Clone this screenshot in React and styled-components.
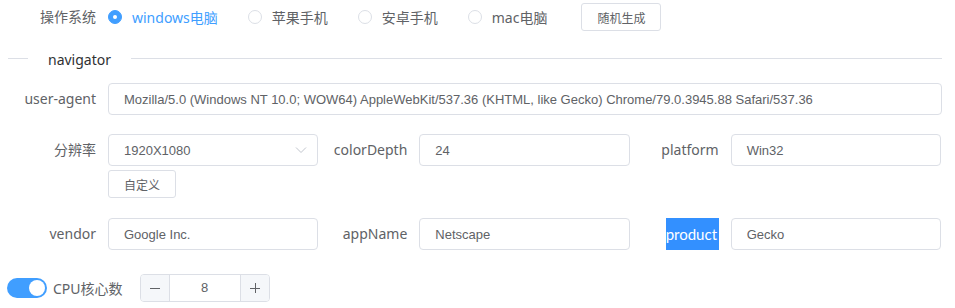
import React from "react";
import styled, { createGlobalStyle } from "styled-components";

const GlobalStyle = createGlobalStyle`
  html, body {
    margin: 0;
    padding: 0;
    background: #fff;
  }
  body {
    font-family: "Noto Sans", "Noto Sans CJK SC", sans-serif;
    color: #606266;
  }
`;

const Page = styled.div`
  width: 934px;
  padding: 0 13px 0 8px;
`;

const TopRow = styled.div`
  display: flex;
  align-items: center;
  height: 34px;
`;

const Label = styled.label`
  flex: 0 0 100px;
  box-sizing: border-box;
  padding-right: 12px;
  text-align: right;
  font-size: 14px;
  line-height: 32px;
  color: #606266;
  white-space: nowrap;
`;

const Selected = styled.span`
  background: #3390ff;
  color: #fff;
  font-family: "Lato", sans-serif;
  font-size: 15px;
  display: inline-block;
  line-height: 32px;
  width: 53px;
  overflow: hidden;
  vertical-align: top;
  text-align: left;
`;

const RadioGroup = styled.div`
  display: flex;
  align-items: center;
`;

const Radio = styled.span`
  display: inline-flex;
  align-items: center;
  margin-right: 30px;
  font-size: 14px;
  color: ${p => (p.checked ? "#409eff" : "#606266")};
  cursor: pointer;
`;

const RadioDot = styled.span`
  box-sizing: border-box;
  width: 14px;
  height: 14px;
  border-radius: 50%;
  border: 1px solid ${p => (p.checked ? "#409eff" : "#dcdfe6")};
  background: ${p => (p.checked ? "#409eff" : "#fff")};
  margin-right: 10px;
  display: flex;
  align-items: center;
  justify-content: center;
  &::after {
    content: "";
    width: 4px;
    height: 4px;
    border-radius: 50%;
    background: #fff;
    display: ${p => (p.checked ? "block" : "none")};
  }
`;

const MiniButton = styled.button`
  box-sizing: border-box;
  height: 28px;
  padding: 0 15px;
  margin-left: ${p => p.$ml || 0}px;
  border: 1px solid #dcdfe6;
  border-radius: 3px;
  background: #fff;
  color: #606266;
  font-family: "Noto Sans CJK SC", sans-serif;
  font-size: 12px;
  cursor: pointer;
`;

const Divider = styled.div`
  position: relative;
  height: 1px;
  background: #dcdfe6;
  margin: 24px 0;
`;

const DividerText = styled.span`
  position: absolute;
  left: 20px;
  top: 50%;
  transform: translateY(-50%);
  padding: 0 20px;
  background: #fff;
  font-size: 14px;
  font-weight: 400;
  color: #303133;
`;

const FormRow = styled.div`
  display: ${p => (p.cols ? "grid" : "flex")};
  grid-template-columns: repeat(${p => p.cols || 1}, 1fr);
  margin-bottom: ${p => p.mb}px;
`;

const Item = styled.div`
  display: flex;
  align-items: flex-start;
  padding-right: ${p => (p.full ? 0 : 1)}px;
  flex: 1;
`;

const Field = styled.div`
  flex: 1;
  display: flex;
  flex-direction: column;
  align-items: flex-start;
  gap: 4px;
`;

const InputBox = styled.div`
  box-sizing: border-box;
  position: relative;
  width: 100%;
  height: 32px;
  border: 1px solid #dcdfe6;
  border-radius: 4px;
  padding: 0 15px;
  display: flex;
  align-items: center;
  font-family: "Liberation Sans", Arial, sans-serif;
  font-size: 13px;
  color: #606266;
  white-space: nowrap;
  overflow: hidden;
`;

const Arrow = styled.svg`
  position: absolute;
  right: 10px;
  top: 50%;
  margin-top: -4px;
`;

const BottomRow = styled.div`
  display: flex;
  align-items: center;
  height: 28px;
`;

const Switch = styled.span`
  box-sizing: border-box;
  width: 40px;
  height: 20px;
  border-radius: 10px;
  background: #409eff;
  margin-left: -1px;
  display: flex;
  align-items: center;
  justify-content: flex-end;
  padding: 0 2px;
  &::after {
    content: "";
    width: 16px;
    height: 16px;
    border-radius: 50%;
    background: #fff;
  }
`;

const SwitchLabel = styled.span`
  margin-left: 6px;
  font-size: 14px;
  color: #606266;
  margin-right: 17px;
`;

const NumberBox = styled.div`
  box-sizing: border-box;
  width: 130px;
  height: 28px;
  border: 1px solid #dcdfe6;
  border-radius: 4px;
  display: flex;
  overflow: hidden;
`;

const Step = styled.span`
  width: 28px;
  flex: 0 0 28px;
  background: #f5f7fa;
  color: #606266;
  display: flex;
  align-items: center;
  justify-content: center;
  border-left: ${p => (p.side === "right" ? "1px solid #dcdfe6" : "none")};
  border-right: ${p => (p.side === "left" ? "1px solid #dcdfe6" : "none")};
`;

const NumberValue = styled.span`
  flex: 1;
  text-align: center;
  line-height: 26px;
  font-family: "Liberation Sans", Arial, sans-serif;
  font-size: 13px;
  color: #606266;
`;

const osList = ["windows电脑", "苹果手机", "安卓手机", "mac电脑"];

const ua =
  "Mozilla/5.0 (Windows NT 10.0; WOW64) AppleWebKit/537.36 (KHTML, like Gecko) Chrome/79.0.3945.88 Safari/537.36";

export default function App() {
  return (
    <Page>
      <GlobalStyle />
      <TopRow>
        <Label>操作系统</Label>
        <RadioGroup>
          {osList.map((os, i) => (
            <Radio key={os} checked={i === 0}>
              <RadioDot checked={i === 0} />
              {os}
            </Radio>
          ))}
        </RadioGroup>
        <MiniButton $ml={4}>随机生成</MiniButton>
      </TopRow>

      <Divider>
        <DividerText>navigator</DividerText>
      </Divider>

      <FormRow mb={19}>
        <Item full>
          <Label>user-agent</Label>
          <InputBox>{ua}</InputBox>
        </Item>
      </FormRow>

      <FormRow cols={3} mb={20}>
        <Item>
          <Label>分辨率</Label>
          <Field>
            <InputBox>
              1920X1080
              <Arrow width="12" height="8" viewBox="0 0 12 8">
                <path d="M1 1.5 L6 6.5 L11 1.5" fill="none" stroke="#c0c4cc" strokeWidth="1" />
              </Arrow>
            </InputBox>
            <MiniButton>自定义</MiniButton>
          </Field>
        </Item>
        <Item>
          <Label>colorDepth</Label>
          <InputBox>24</InputBox>
        </Item>
        <Item>
          <Label>platform</Label>
          <InputBox>Win32</InputBox>
        </Item>
      </FormRow>

      <FormRow cols={3} mb={24}>
        <Item>
          <Label>vendor</Label>
          <InputBox>Google Inc.</InputBox>
        </Item>
        <Item>
          <Label>appName</Label>
          <InputBox>Netscape</InputBox>
        </Item>
        <Item>
          <Label>
            <Selected>product</Selected>
          </Label>
          <InputBox>Gecko</InputBox>
        </Item>
      </FormRow>

      <BottomRow>
        <Switch />
        <SwitchLabel>CPU核心数</SwitchLabel>
        <NumberBox>
          <Step side="left">
            <svg width="10" height="10" viewBox="0 0 10 10">
              <path d="M0 5.5 H10" stroke="#606266" strokeWidth="1" />
            </svg>
          </Step>
          <NumberValue>8</NumberValue>
          <Step side="right">
            <svg width="10" height="10" viewBox="0 0 10 10">
              <path d="M0 5.5 H10 M5.5 0 V10" stroke="#606266" strokeWidth="1" />
            </svg>
          </Step>
        </NumberBox>
      </BottomRow>
    </Page>
  );
}
